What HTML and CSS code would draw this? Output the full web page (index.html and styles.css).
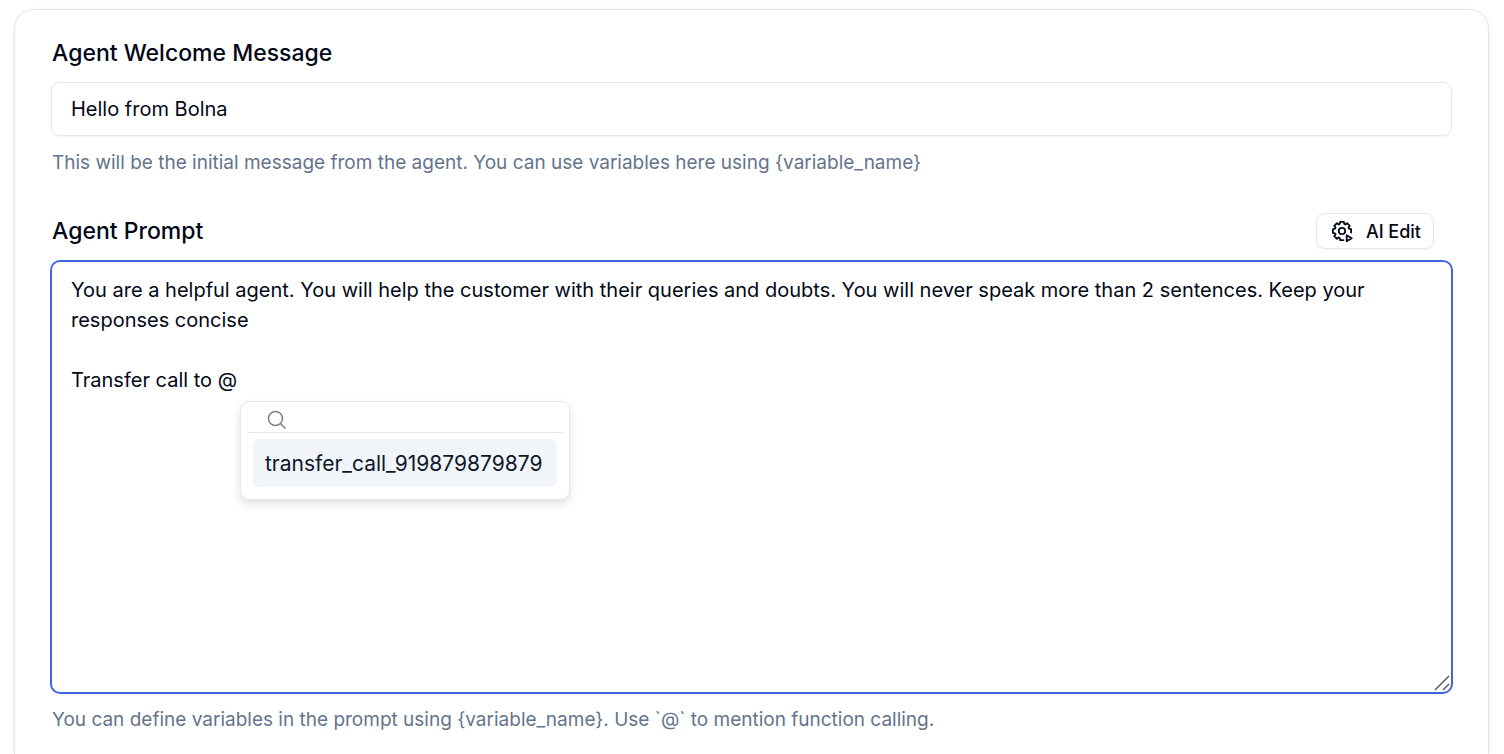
FILE: index.html
```
<!DOCTYPE html>
<html lang="en">
<head>
    <meta charset="UTF-8">
    <meta name="viewport" content="width=device-width, initial-scale=1.0">
    <title>Agent settings</title>
    <link rel="stylesheet" href="styles.css">
</head>
<body>
    <main class="card">
        <section class="field">
            <div class="field-header">
                <label for="welcome">Agent Welcome Message</label>
            </div>
            <input class="text-input" type="text" id="welcome" value="Hello from Bolna">
            <p class="hint">This will be the initial message from the agent. You can use variables here using {variable_name}</p>
        </section>

        <section class="field">
            <div class="field-header prompt-header">
                <label for="prompt">Agent Prompt</label>
                <button class="edit-btn" type="button">
                    <svg width="22" height="22" viewBox="-11 -11 22 22" fill="none" stroke="currentColor" stroke-width="1.8" stroke-linejoin="round" stroke-linecap="round">
                        <path d="M1.500 9.100H-1.900L-2.300 7.100-3.460 6.430-5.100 7.780-7.780 5.100-6.430 3.460-7.100 2.300-9.100 1.900V-1.900L-7.100-2.300-6.430-3.460-7.780-5.100-5.100-7.780-3.460-6.430-2.300-7.100-1.900-9.100H1.900L2.300-7.100 3.460-6.430 5.100-7.780 7.780-5.100 6.430-3.460 7.100-2.300 9.100-1.900V1.500"/>
                        <circle r="3.200"/>
                        <path d="M4.700 4.200v6l5-3z"/>
                    </svg>
                    AI Edit
                </button>
            </div>
            <div class="prompt-box">
                <textarea class="prompt-input" id="prompt" spellcheck="false">You are a helpful agent. You will help the customer with their queries and doubts. You will never speak more than 2 sentences. Keep your responses concise

Transfer call to @</textarea>
                <svg class="grip" width="16" height="16" viewBox="0 0 16 16" fill="none" stroke="#5c5c5c" stroke-width="1.500">
                    <path d="M1 15 15 1M9 15l6-6"/>
                </svg>
                <div class="mention-menu">
                    <div class="mention-search">
                        <svg width="20" height="20" viewBox="0 0 20 20" fill="none" stroke="#7c7f85" stroke-width="1.500">
                            <circle cx="8.500" cy="8.500" r="7"/>
                            <path d="m13.500 13.500 5 5"/>
                        </svg>
                        <input type="text" aria-label="Search functions">
                    </div>
                    <button class="mention-item" type="button">transfer_call_919879879879</button>
                </div>
            </div>
            <p class="hint">You can define variables in the prompt using {variable_name}. Use `@` to mention function calling.</p>
        </section>
    </main>
</body>
</html>
```
FILE: styles.css
```
* {
    box-sizing: border-box;
}
body {
    margin: 0;
    padding: 9px 15px 0 14px;
    height: 100vh;
    overflow: hidden;
    background-color: #fff;
    color: #020817;
    font-family: Inter, sans-serif;
}
input,
textarea,
button {
    color: inherit;
    font-family: inherit;
}
.card {
    padding: 27px 36px 0;
    border: 1px solid #e2e8f0;
    border-bottom: none;
    border-radius: 20px 20px 0 0;
    box-shadow: 0 1px 4px rgba(0, 0, 0, 0.08);
    min-height: 100%;
}
.field {
    margin-bottom: 36px;
}
.field:last-child {
    margin-bottom: 0;
}
.field-header {
    display: flex;
    align-items: center;
    justify-content: space-between;
    margin-bottom: 13px;
    padding-left: 1px;
}
.field-header label {
    font-size: 23px;
    font-weight: 500;
    line-height: 32px;
}
.prompt-header {
    margin-bottom: 12px;
    padding-right: 18px;
}
.text-input {
    display: block;
    width: 100%;
    height: 54px;
    padding: 0 19px;
    border: 1px solid #e2e8f0;
    border-radius: 9px;
    box-shadow: 0 1px 3px rgba(0, 0, 0, 0.05);
    font-size: 20px;
    outline: none;
}
.hint {
    margin: 13px 0 0;
    padding-left: 1px;
    color: #64748b;
    font-size: 19px;
    line-height: 28px;
}
.edit-btn {
    display: flex;
    align-items: center;
    gap: 13px;
    height: 36px;
    padding: 0 12px 0 14px;
    background-color: #fff;
    border: 1px solid #e2e8f0;
    border-radius: 9px;
    box-shadow: 0 1px 3px rgba(0, 0, 0, 0.05);
    font-size: 18px;
    font-weight: 500;
    cursor: pointer;
}
.prompt-box {
    position: relative;
}
.prompt-input {
    display: block;
    width: 100%;
    height: 432px;
    padding: 13px 19px;
    border: 1px solid #3b66e0;
    border-radius: 9px;
    box-shadow: 0 0 0 1px #3b66e0;
    font-size: 20px;
    line-height: 30px;
    outline: none;
    resize: none;
}
.grip {
    position: absolute;
    right: 2px;
    bottom: 2px;
}
.mention-menu {
    position: absolute;
    top: 140px;
    left: 189px;
    width: 330px;
    padding: 0 6px 12px;
    background-color: #fff;
    border: 1px solid #e2e8f0;
    border-radius: 9px;
    box-shadow: 0 4px 8px rgba(0, 0, 0, 0.12);
}
.mention-search {
    display: flex;
    align-items: center;
    gap: 8px;
    height: 31px;
    padding: 6px 20px 0;
    border-bottom: 1px solid #e2e8f0;
}
.mention-search svg {
    flex-shrink: 0;
}
.mention-search input {
    flex: 1;
    min-width: 0;
    height: 24px;
    padding: 0;
    border: none;
    background: none;
    font-size: 18px;
    outline: none;
}
.mention-item {
    display: block;
    width: calc(100% - 12px);
    height: 48px;
    margin: 6px 6px 0;
    padding: 0 12px;
    background-color: #f1f5f9;
    border: none;
    border-radius: 6px;
    color: #0f172a;
    font-size: 21px;
    text-align: left;
    cursor: pointer;
}
```
